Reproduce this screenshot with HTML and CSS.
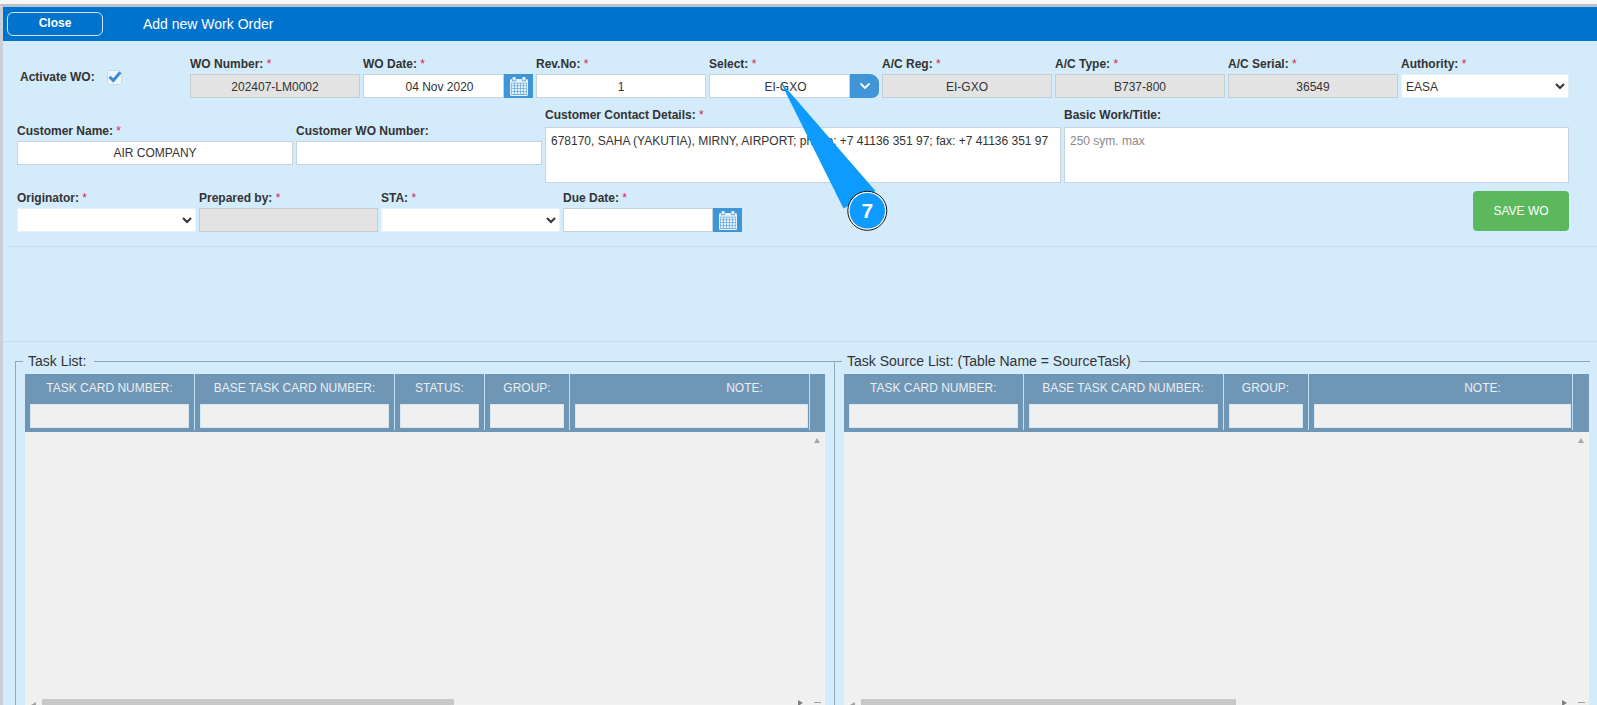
FILE: index.html
```html
<!DOCTYPE html>
<html lang="en">
<head>
<meta charset="utf-8">
<title>Add new Work Order</title>
<link rel="stylesheet" href="styles.css">
</head>
<body>
<svg class="defs" width="0" height="0" aria-hidden="true">
  <symbol id="cal" viewBox="0 0 18 19">
    <path fill="#e6f1fa" d="M3.200 0h1.800a.6.6 0 0 1 .6.6V3a.6.6 0 0 1-.6.6H3.200a.6.6 0 0 1-.6-.6V.6a.6.6 0 0 1 .6-.6zM13 0h1.800a.6.6 0 0 1 .6.6V3a.6.6 0 0 1-.6.6H13a.6.6 0 0 1-.6-.6V.6A.6.6 0 0 1 13 0z"/>
    <path fill="#e6f1fa" d="M1.500 2h.5v1.300a1 1 0 0 0 1 1h2.200a1 1 0 0 0 1-1V2h5.600v1.300a1 1 0 0 0 1 1H15a1 1 0 0 0 1-1V2h.5A1.500 1.500 0 0 1 18 3.500v14a1.500 1.500 0 0 1-1.500 1.500h-15A1.500 1.500 0 0 1 0 17.500v-14A1.500 1.500 0 0 1 1.500 2z"/>
    <rect x="1.300" y="5.800" width="15.400" height="12" fill="#3f95d6"/>
    <g fill="#e6f1fa">
      <rect x="1.800" y="6.300" width="2.500" height="2.300"/><rect x="4.900" y="6.300" width="2.500" height="2.300"/><rect x="7.900" y="6.300" width="2.500" height="2.300"/><rect x="10.900" y="6.300" width="2.500" height="2.300"/><rect x="13.900" y="6.300" width="2.400" height="2.300"/>
      <rect x="1.800" y="9.100" width="2.500" height="2.300"/><rect x="4.900" y="9.100" width="2.500" height="2.300"/><rect x="7.900" y="9.100" width="2.500" height="2.300"/><rect x="10.900" y="9.100" width="2.500" height="2.300"/><rect x="13.900" y="9.100" width="2.400" height="2.300"/>
      <rect x="1.800" y="11.900" width="2.500" height="2.300"/><rect x="4.900" y="11.900" width="2.500" height="2.300"/><rect x="7.900" y="11.900" width="2.500" height="2.300"/><rect x="10.900" y="11.900" width="2.500" height="2.300"/><rect x="13.900" y="11.900" width="2.400" height="2.300"/>
      <rect x="1.800" y="14.700" width="2.500" height="2.500"/><rect x="4.900" y="14.700" width="2.500" height="2.500"/><rect x="7.900" y="14.700" width="2.500" height="2.500"/><rect x="10.900" y="14.700" width="2.500" height="2.500"/><rect x="13.900" y="14.700" width="2.400" height="2.500"/>
    </g>
  </symbol>
</svg>

<div class="window">
  <header class="titlebar">
    <button class="close-btn" type="button">Close</button>
    <h1 class="title">Add new Work Order</h1>
  </header>

  <form class="form">
    <div class="row-top">
      <div class="activate">
        <span class="activate-label">Activate WO:</span>
        <span class="checkbox">
          <svg viewBox="0 0 15 15" width="15" height="15"><path d="M2.600 6.800l3.600 3.800 7.200-8.400" fill="none" stroke="#3a8dd3" stroke-width="3"/></svg>
        </span>
      </div>
      <div class="field"><label class="lbl">WO Number: <i>*</i></label><input class="inp ro" readonly value="202407-LM0002"></div>
      <div class="field"><label class="lbl">WO Date: <i>*</i></label>
        <div class="group"><input class="inp inp-offset" value="04 Nov 2020"><span class="cal"><svg width="18" height="19"><use href="#cal"/></svg></span></div>
      </div>
      <div class="field"><label class="lbl">Rev.No: <i>*</i></label><input class="inp" value="1"></div>
      <div class="field"><label class="lbl">Select: <i>*</i></label>
        <div class="group"><input class="inp inp-offset" value="EI-GXO"><span class="combo-btn"><svg width="12" height="8" viewBox="0 0 12 8"><path d="M1.500 1.500L6 6l4.500-4.500" fill="none" stroke="#fff" stroke-width="1.800"/></svg></span></div>
      </div>
      <div class="field"><label class="lbl">A/C Reg: <i>*</i></label><input class="inp ro" readonly value="EI-GXO"></div>
      <div class="field"><label class="lbl">A/C Type: <i>*</i></label><input class="inp ro" readonly value="B737-800"></div>
      <div class="field"><label class="lbl">A/C Serial: <i>*</i></label><input class="inp ro" readonly value="36549"></div>
      <div class="field field-last"><label class="lbl">Authority: <i>*</i></label><select class="sel"><option>EASA</option></select></div>
    </div>

    <div class="row-mid">
      <div class="field field-low"><label class="lbl lbl-tight">Customer Name: <i>*</i></label><input class="inp" value="AIR COMPANY"></div>
      <div class="field field-low"><label class="lbl lbl-tight">Customer WO Number:</label><input class="inp"></div>
      <div class="field"><label class="lbl lbl-wide">Customer Contact Details: <i>*</i></label><textarea class="txt">678170, SAHA (YAKUTIA), MIRNY, AIRPORT; phone: +7 41136 351 97; fax: +7 41136 351 97</textarea></div>
      <div class="field"><label class="lbl lbl-wide">Basic Work/Title:</label><textarea class="txt" placeholder="250 sym. max"></textarea></div>
    </div>

    <div class="row-low">
      <div class="field"><label class="lbl">Originator: <i>*</i></label><select class="sel"><option></option></select></div>
      <div class="field"><label class="lbl">Prepared by: <i>*</i></label><input class="inp ro" readonly></div>
      <div class="field"><label class="lbl">STA: <i>*</i></label><select class="sel"><option></option></select></div>
      <div class="field"><label class="lbl">Due Date: <i>*</i></label>
        <div class="group"><input class="inp"><span class="cal"><svg width="18" height="19"><use href="#cal"/></svg></span></div>
      </div>
      <button class="save-btn" type="button">SAVE WO</button>
    </div>
  </form>

  <hr class="rule rule-a">
  <hr class="rule rule-b">

  <div class="lists">
    <fieldset class="set set-a">
      <legend class="set-title">Task List:</legend>
      <div class="grid-table">
        <div class="thead cols-a">
          <div class="th"><span class="th-text">TASK CARD NUMBER:</span><input class="filter"></div>
          <div class="th"><span class="th-text">BASE TASK CARD NUMBER:</span><input class="filter"></div>
          <div class="th"><span class="th-text">STATUS:</span><input class="filter"></div>
          <div class="th"><span class="th-text">GROUP:</span><input class="filter"></div>
          <div class="th th-note"><span class="th-text note-a">NOTE:</span><input class="filter"></div>
          <div class="th-end"></div>
        </div>
        <div class="tbody">
          <div class="tbody-main"><div class="vbar"><span class="arrow-up"></span></div></div>
          <div class="hbar">
            <span class="hbar-start"><span class="arrow-left"></span></span>
            <span class="thumb thumb-a"></span>
            <span class="hbar-fill"></span>
            <span class="arrow-right"></span>
            <span class="hbar-corner"><span class="arrow-stub"></span></span>
          </div>
        </div>
      </div>
    </fieldset>
    <fieldset class="set set-b">
      <legend class="set-title">Task Source List: (Table Name = SourceTask)</legend>
      <div class="grid-table">
        <div class="thead cols-b">
          <div class="th"><span class="th-text">TASK CARD NUMBER:</span><input class="filter"></div>
          <div class="th"><span class="th-text">BASE TASK CARD NUMBER:</span><input class="filter"></div>
          <div class="th"><span class="th-text">GROUP:</span><input class="filter"></div>
          <div class="th th-note"><span class="th-text note-b">NOTE:</span><input class="filter"></div>
          <div class="th-end"></div>
        </div>
        <div class="tbody">
          <div class="tbody-main"><div class="vbar"><span class="arrow-up"></span></div></div>
          <div class="hbar">
            <span class="hbar-start"><span class="arrow-left"></span></span>
            <span class="thumb thumb-b"></span>
            <span class="hbar-fill"></span>
            <span class="arrow-right"></span>
            <span class="hbar-corner"><span class="arrow-stub"></span></span>
          </div>
        </div>
      </div>
    </fieldset>
  </div>
</div>

<svg class="callout" width="120" height="160" viewBox="770 75 120 160">
  <polygon points="780,81 875.500,191 843.500,208.500" fill="#0d9bff"/>
  <circle cx="867.300" cy="210.800" r="19.500" fill="#fff" stroke="#111" stroke-width="1"/>
  <circle cx="867.300" cy="210.800" r="17.800" fill="#0d9bff"/>
  <text x="867.300" y="218" text-anchor="middle" class="callout-num">7</text>
</svg>
</body>
</html>
```

FILE: styles.css
```css
* { box-sizing: border-box; }
html, body { margin: 0; padding: 0; height: 705px; overflow: hidden; }
body {
  position: relative;
  background: #f6f8fa;
  font: 12px/16px "Liberation Sans", Arial, sans-serif;
  color: #333;
  padding-top: 4px;
}
.defs { position: absolute; }

.window {
  height: 701px;
  overflow: hidden;
  background: #d4ebfc;
  border-top: 3px solid #b9c3cc;
  border-left: 3px solid #c9d0d7;
}

.titlebar {
  height: 34px;
  display: flex;
  align-items: center;
  background: #0073cc;
  padding-left: 4px;
}
.close-btn {
  width: 96px;
  height: 24px;
  padding: 0 0 2px;
  background: #0073cc;
  color: #fff;
  border: 1px solid #cfe3f4;
  border-radius: 6px;
  font: bold 12px/16px "Liberation Sans", Arial, sans-serif;
}
.title {
  margin: 0 0 0 40px;
  color: #fff;
  font: normal 14px/18px "Liberation Sans", Arial, sans-serif;
}

.form { padding: 14px 28px 0 14px; }

.row-top { display: flex; gap: 3px; }
.activate {
  width: 170px;
  flex: 0 0 170px;
  display: flex;
  align-items: flex-start;
  padding: 14px 0 0 3px;
}
.activate-label { font-weight: bold; width: 87px; }
.checkbox {
  display: block;
  width: 15px;
  height: 15px;
  margin-top: 1px;
  background: #eef5fb;
  border: 1px solid #c9dbe9;
  border-radius: 2px;
}
.checkbox svg { display: block; margin: -1px; }
.row-top .field { flex: 0 0 170px; }
.row-top .field-last { flex: 1 1 0; }

.field { display: flex; flex-direction: column; min-width: 0; }
.field-low { margin-top: 16px; }
.lbl { display: block; height: 16px; margin-bottom: 3px; font-weight: bold; white-space: nowrap; }
.lbl-tight { margin-bottom: 2px; }
.lbl-wide { margin-bottom: 4px; }
.row-top .lbl, .row-low .lbl { margin-top: 1px; margin-bottom: 2px; }
.lbl i { font-style: normal; font-weight: normal; color: #d9214f; }

.inp, .sel, .txt {
  font: 12px/16px "Liberation Sans", Arial, sans-serif;
  color: #333;
  background: #fff;
  border: 1px solid #c6d3dc;
  border-radius: 0;
  outline: none;
}
.inp {
  display: block;
  width: 100%;
  height: 24px;
  min-width: 0;
  padding: 0 6px;
  text-align: center;
}
.row-top .inp { padding-top: 2px; }
.row-top .inp-offset { padding-left: 18px; }
.ro { background: #e3e3e3; border-color: #c6ced4; }
.sel { width: 100%; height: 24px; padding: 0; border-color: #e6f1f9; }
.row-top .sel { padding-top: 1px; }
.txt {
  display: block;
  width: 100%;
  height: 56px;
  padding: 5px;
  resize: none;
  overflow: hidden;
}
.txt::placeholder { color: #8a8a8a; opacity: 1; }

.group { display: flex; height: 24px; }
.group .inp { flex: 1 1 0; }
.cal, .combo-btn {
  flex: 0 0 29px;
  display: flex;
  align-items: center;
  justify-content: center;
  background: #3f95d6;
}
.combo-btn { border-radius: 0 9px 7px 0; }

.row-mid {
  display: grid;
  grid-template-columns: 276px 246px 516px 1fr;
  gap: 3px;
  margin-top: 9px;
}
.row-low { display: flex; gap: 3px; margin-top: 6px; }
.row-low .field { width: 179px; }
.save-btn {
  margin: 2px 0 0 auto;
  width: 96px;
  height: 40px;
  background: #5cb85c;
  border: 0;
  border-radius: 4px;
  color: #fff;
  font: 12px/16px "Liberation Sans", Arial, sans-serif;
}

.rule { display: block; height: 1px; border: 0; background: #c8deef; }
.rule-a { margin: 14px 0 0 5px; }
.rule-b { margin: 94px 0 0 0; }

.lists { display: flex; margin-top: 11px; padding: 0 7px 0 12px; }
.set {
  margin: 0;
  min-width: 0;
  border: 0;
  border-top: 1px solid #8fa7ba;
  border-left: 1px solid #8fa7ba;
  padding: 5px 9px 0;
}
.set-a { flex: 0 0 819px; }
.set-b { flex: 1 1 0; padding-right: 1px; }
.set-title {
  margin-left: -2px;
  padding: 0 8px 0 5px;
  font-size: 14px;
  line-height: 16px;
  color: #333;
}

.thead {
  display: grid;
  height: 58px;
  padding-bottom: 2px;
  background: #7096b6;
}
.cols-a { grid-template-columns: 170px 200px 90px 85px 240px 1fr; }
.cols-b { grid-template-columns: 179.5px 200px 85px 264px 1fr; }
.th {
  display: flex;
  flex-direction: column;
  padding: 6px 5px 0;
  border-right: 1px solid #c3dff4;
  text-align: center;
}
.th-note { padding-right: 1px; }
.th-text { height: 16px; margin-bottom: 8px; color: #e8eff5; white-space: nowrap; }
.note-a { padding-left: 106px; }
.note-b { padding-left: 81px; }
.filter {
  display: block;
  width: 100%;
  height: 24px;
  background: #f0f0f0;
  border: 1px solid #d6e6f2;
  border-radius: 0;
  outline: none;
}

.tbody { display: flex; flex-direction: column; height: 284px; background: #f0f0f0; }
.tbody-main { flex: 1 1 auto; display: flex; justify-content: flex-end; }
.vbar { width: 16px; display: flex; justify-content: center; padding-top: 6px; }
.arrow-up {
  width: 0;
  height: 0;
  border: 3.5px solid transparent;
  border-top: 0;
  border-bottom: 5px solid #a8a8a8;
}
.hbar { flex: 0 0 17px; display: flex; background: #f1f1f1; }
.hbar-start { flex: 0 0 17px; display: flex; justify-content: center; padding-top: 3px; }
.arrow-left {
  width: 0;
  height: 0;
  border: 3.5px solid transparent;
  border-left: 0;
  border-right: 5px solid #a0a0a0;
}
.thumb { background: #c8c8c8; }
.thumb-a { flex: 0 0 412px; }
.thumb-b { flex: 0 0 375px; }
.hbar-fill { flex: 1 1 auto; }
.arrow-right {
  flex: 0 0 auto;
  width: 0;
  height: 0;
  margin-top: 1px;
  border: 3.5px solid transparent;
  border-right: 0;
  border-left: 5px solid #808080;
}
.hbar-corner { flex: 0 0 22px; display: flex; justify-content: center; padding: 3px 0 0 6px; }
.arrow-stub { display: block; width: 7px; height: 1px; background: #a0a0a0; }

.callout { position: absolute; left: 770px; top: 75px; }
.callout-num { font: bold 21px "Liberation Sans", Arial, sans-serif; fill: #fff; }
```
